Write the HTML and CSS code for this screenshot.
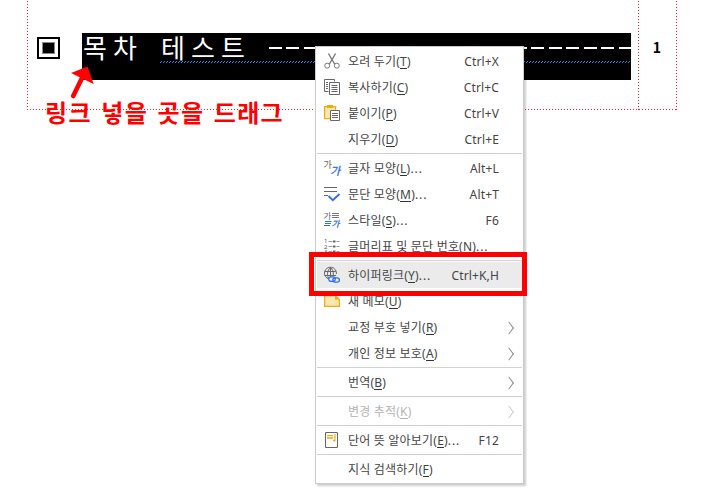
FILE: index.html
```html
<!DOCTYPE html>
<html lang="ko">
<head>
    <meta charset="UTF-8">
    <title>목차 테스트</title>
    <link rel="stylesheet" href="styles.css">
</head>
<body>
    <div class="document">
        <div class="content-cell">
            <span class="bullet"></span>
            <div class="selection">
                <span class="title">목차 테스트</span>
                <span class="leader"></span>
                <span class="squiggle"></span>
            </div>
        </div>
        <div class="page-cell">1</div>
    </div>

    <svg class="arrow" width="26" height="36" viewBox="0 0 26 36">
        <path d="M4.2 30 L13.5 11" stroke="#f00" stroke-width="4.6" stroke-linecap="round"/>
        <path d="M18.6 .6 L2 7 L24.6 18Z" fill="#f00"/>
    </svg>
    <div class="note">링크 넣을 곳을 드래그</div>

    <ul class="menu">
        <li>
            <svg viewBox="0 0 16 16"><g fill="none" stroke="#777"><path d="M4.4.5 10.6 11M11.6.5 5.4 11" stroke-width="1.4"/><circle cx="3.2" cy="12.7" r="2.5"/><circle cx="12.8" cy="12.7" r="2.5"/></g></svg>
            <span class="label">오려 두기(<u>T</u>)</span><span class="key">Ctrl+X</span>
        </li>
        <li>
            <svg viewBox="0 0 16 16"><g fill="none" stroke="#666"><path d="M4.5 12.5H.5V.5h10v2M2 3.5h2M2 5.5h2M2 7.5h2M2 9.5h2"/><path d="M5.5 3.5h10v12h-10zM7.5 6.5h6M7.5 8.5h6M7.5 10.5h6M7.5 12.5h6"/></g></svg>
            <span class="label">복사하기(<u>C</u>)</span><span class="key">Ctrl+C</span>
        </li>
        <li>
            <svg viewBox="0 0 16 16"><path d="M.6 1.6h11v12H.6z" fill="#fce6b3" stroke="#f0ab12" stroke-width="1.2"/><path d="M3 0h6v3H3z" fill="#f0ab12"/><path d="M6.5 5.5h9v10h-9z" fill="#fff" stroke="#666"/><path d="M8 8.5h6M8 10.5h6M8 12.5h6" stroke="#666"/></svg>
            <span class="label">붙이기(<u>P</u>)</span><span class="key">Ctrl+V</span>
        </li>
        <li><span class="label">지우기(<u>D</u>)</span><span class="key">Ctrl+E</span></li>
        <li class="separator"></li>
        <li>
            <svg viewBox="0 0 16 16"><text x="-.5" y="7.5" font-size="9" fill="#666">가</text><text class="slanted" x="6" y="14.5" font-size="11">가</text></svg>
            <span class="label">글자 모양(<u>L</u>)<span class="dots">...</span></span><span class="key">Alt+L</span>
        </li>
        <li>
            <svg viewBox="0 0 16 16"><path d="M0 1.5h13M0 5.5h13M0 9.5h4" stroke="#666"/><path d="m4.5 10 4.3 4.2L15.5 8" fill="none" stroke="#2e6ee6" stroke-width="1.8"/></svg>
            <span class="label">문단 모양(<u>M</u>)<span class="dots">...</span></span><span class="key">Alt+T</span>
        </li>
        <li>
            <svg viewBox="0 0 16 16"><text x="-.5" y="7" font-size="8.5" fill="#666">가</text><path d="M8 1.5h7M8 3.5h7M8 5.5h7" stroke="#777"/><path d="M1 9.5h6.5M1 11.5h6M0 13.5h6" stroke="#2e6ee6"/><text class="slanted" x="7.5" y="15" font-size="8.5">가</text></svg>
            <span class="label">스타일(<u>S</u>)<span class="dots">...</span></span><span class="key">F6</span>
        </li>
        <li>
            <svg viewBox="0 0 16 16"><g fill="#555" font-size="6"><text x="0" y="5">1</text><text x="0" y="10.5">2</text><text x="0" y="16">3</text></g><path d="M4.5 3.5h4m4 0h3M4.5 8.5h4m4 0h3M4.5 13.5h4m4 0h3" stroke="#999"/><path d="M9 2.5h2.5v2H9zm0 5h2.5v2H9zm0 5h2.5v2H9z" fill="#666"/></svg>
            <span class="label">글머리표 및 문단 번호(<u>N</u>)<span class="dots">...</span></span>
        </li>
        <li class="separator"></li>
        <li class="active">
            <svg viewBox="0 0 16 16"><g fill="none" stroke="#666"><path d="M5 12A6 6 0 1 1 12.4 7M.8 4.5h11M.6 8.5h11.5M6.5.5v11M5 12C2.8 9 2.8 3.5 6.5.5M6.5.5c2.3 2 3 4.5 2.8 7.5"/></g><g fill="#ebebeb" stroke="#2e6ee6" stroke-width="1.2"><rect x="4.7" y="9.8" width="6.6" height="4.6" rx="2.3"/><rect x="8.8" y="10.8" width="6.6" height="4.4" rx="2.2" fill="none"/></g></svg>
            <span class="label">하이퍼링크(<u>Y</u>)<span class="dots">...</span></span><span class="key">Ctrl+K,H</span>
        </li>
        <li>
            <svg viewBox="0 0 16 16"><path d="M.6 2.6h10.9l3.9 3.8v7H.6z" fill="#fce6b3" stroke="#f0ab12" stroke-width="1.2"/><path d="M11 2.5v4h4.5z" fill="#f0ab12"/></svg>
            <span class="label">새 메모(<u>U</u>)</span>
        </li>
        <li><span class="label">교정 부호 넣기(<u>R</u>)</span><i class="more"></i></li>
        <li><span class="label">개인 정보 보호(<u>A</u>)</span><i class="more"></i></li>
        <li class="separator"></li>
        <li><span class="label">번역(<u>B</u>)</span><i class="more"></i></li>
        <li class="separator"></li>
        <li class="disabled"><span class="label">변경 추적(<u>K</u>)</span><i class="more"></i></li>
        <li class="separator"></li>
        <li>
            <svg viewBox="0 0 16 16"><path d="M1.5.5h12v15h-12z" fill="#fff" stroke="#666"/><path d="M3 3h6v1.2H3zm0 2.3h6v1.4H3zM10.3 2h1.2v7.5h-1.2zM9 8h2.5v1.3H9z" fill="#f0ab12"/></svg>
            <span class="label">단어 뜻 알아보기(<u>E</u>)<span class="dots">...</span></span><span class="key">F12</span>
        </li>
        <li class="separator"></li>
        <li><span class="label">지식 검색하기(<u>F</u>)</span></li>
    </ul>
    <div class="highlight-box"></div>
</body>
</html>
```
FILE: styles.css
```css
body {
    margin: 0;
    background-color: #fff;
    font-family: "Noto Sans", "Noto Sans CJK KR", sans-serif;
    overflow: hidden;
}

.document {
    display: flex;
    width: 650px;
    height: 109px;
    margin: 1px 0 0 27px;
    background:
        repeating-linear-gradient(to bottom, #f22 0 1px, transparent 1px 3px) 0 0 / 1px 100% no-repeat,
        repeating-linear-gradient(to bottom, #f22 0 1px, transparent 1px 3px) 611px 0 / 1px 100% no-repeat,
        repeating-linear-gradient(to bottom, #f22 0 1px, transparent 1px 3px) 649px 0 / 1px 100% no-repeat,
        repeating-linear-gradient(to right, #f22 0 1px, transparent 1px 3px) 0 108px / 100% 1px no-repeat;
}

.content-cell {
    display: flex;
    width: 611px;
}

.bullet {
    box-sizing: border-box;
    width: 23px;
    height: 22px;
    margin: 36px 22px 0 10px;
    border: 2px solid #000;
    background-color: #000;
    box-shadow: inset 0 0 0 3px #fff, inset 0 0 0 4px #888;
}

.selection {
    display: grid;
    grid-template-columns: 187px 1fr;
    grid-template-rows: 27px 3px;
    width: 549px;
    height: 47px;
    margin-top: 32px;
    background-color: #000;
}

.title {
    padding-left: 1px;
    color: #fff;
    font: 400 26px/27px "Noto Sans CJK KR", sans-serif;
    letter-spacing: 6px;
    word-spacing: 5px;
    white-space: nowrap;
}

.leader {
    height: 2px;
    margin-top: 14px;
    background: repeating-linear-gradient(to right, #fff 0 13px, transparent 13px 17.48px);
}

.squiggle {
    grid-column: 1 / -1;
    height: 2px;
    margin: 1px 1px 0 78px;
    background:
        repeating-linear-gradient(to right, transparent 0 1px, #1e90ff 1px 2px, transparent 2px 3px) 0 0 / 100% 1px no-repeat,
        repeating-linear-gradient(to right, #1e90ff 0 1px, transparent 1px 3px) 0 1px / 100% 1px no-repeat;
}

.page-cell {
    width: 38px;
    padding-top: 36px;
    font: bold 14px/20px "Noto Sans CJK KR", sans-serif;
    text-align: center;
}

.arrow {
    position: absolute;
    left: 69px;
    top: 66px;
}

.note {
    position: absolute;
    left: 45px;
    top: 98px;
    color: #f00;
    font: bold 24px/28px "Noto Sans CJK KR", sans-serif;
    letter-spacing: 1.3px;
    word-spacing: 1.5px;
    white-space: nowrap;
}

.menu {
    position: absolute;
    left: 315px;
    top: 46px;
    box-sizing: border-box;
    width: 209px;
    margin: 0;
    padding: 1px;
    list-style: none;
    border: 1px solid #ccc;
    background-color: #fff;
    box-shadow: 2px 2px 2px rgba(0, 0, 0, 0.2);
    color: #444;
    font-size: 12px;
}

.menu li {
    display: grid;
    grid-template-columns: 16px 1fr auto;
    column-gap: 8px;
    align-items: center;
    height: 26px;
    padding: 0 23px 0 7px;
}

.menu svg {
    width: 16px;
    height: 16px;
    overflow: visible;
}

.label {
    grid-column: 2;
    padding-top: 2px;
    line-height: 16px;
    letter-spacing: 0.2px;
    white-space: nowrap;
}

.label u {
    display: inline-block;
    height: 14px;
    line-height: 16px;
    border-bottom: 1px solid #333;
    text-decoration: none;
}

.dots {
    letter-spacing: 0.9px;
}

.key {
    padding-top: 2px;
    line-height: 16px;
    letter-spacing: 0.15px;
}

.menu .separator {
    height: 1px;
    margin: 1px 0;
    padding: 0;
    background-color: #d2d2d2;
}

.menu .active {
    background-color: #ebebeb;
}

.menu .disabled {
    color: #b4b4b4;
}

.disabled u {
    border-color: #b4b4b4;
}

.more {
    width: 7px;
    height: 7px;
    margin: 1px -13px 0 0;
    border: solid #888;
    border-width: 1px 1px 0 0;
    transform: translateX(6px) rotate(45deg) skew(8deg, 8deg);
}

.disabled .more {
    border-color: #ccc;
}

.slanted {
    fill: #2e6ee6;
    stroke: #2e6ee6;
    stroke-width: 0.3px;
    font-style: italic;
}

.highlight-box {
    position: absolute;
    left: 309px;
    top: 252px;
    width: 208px;
    height: 34px;
    border: 5px solid #f00;
}
```
